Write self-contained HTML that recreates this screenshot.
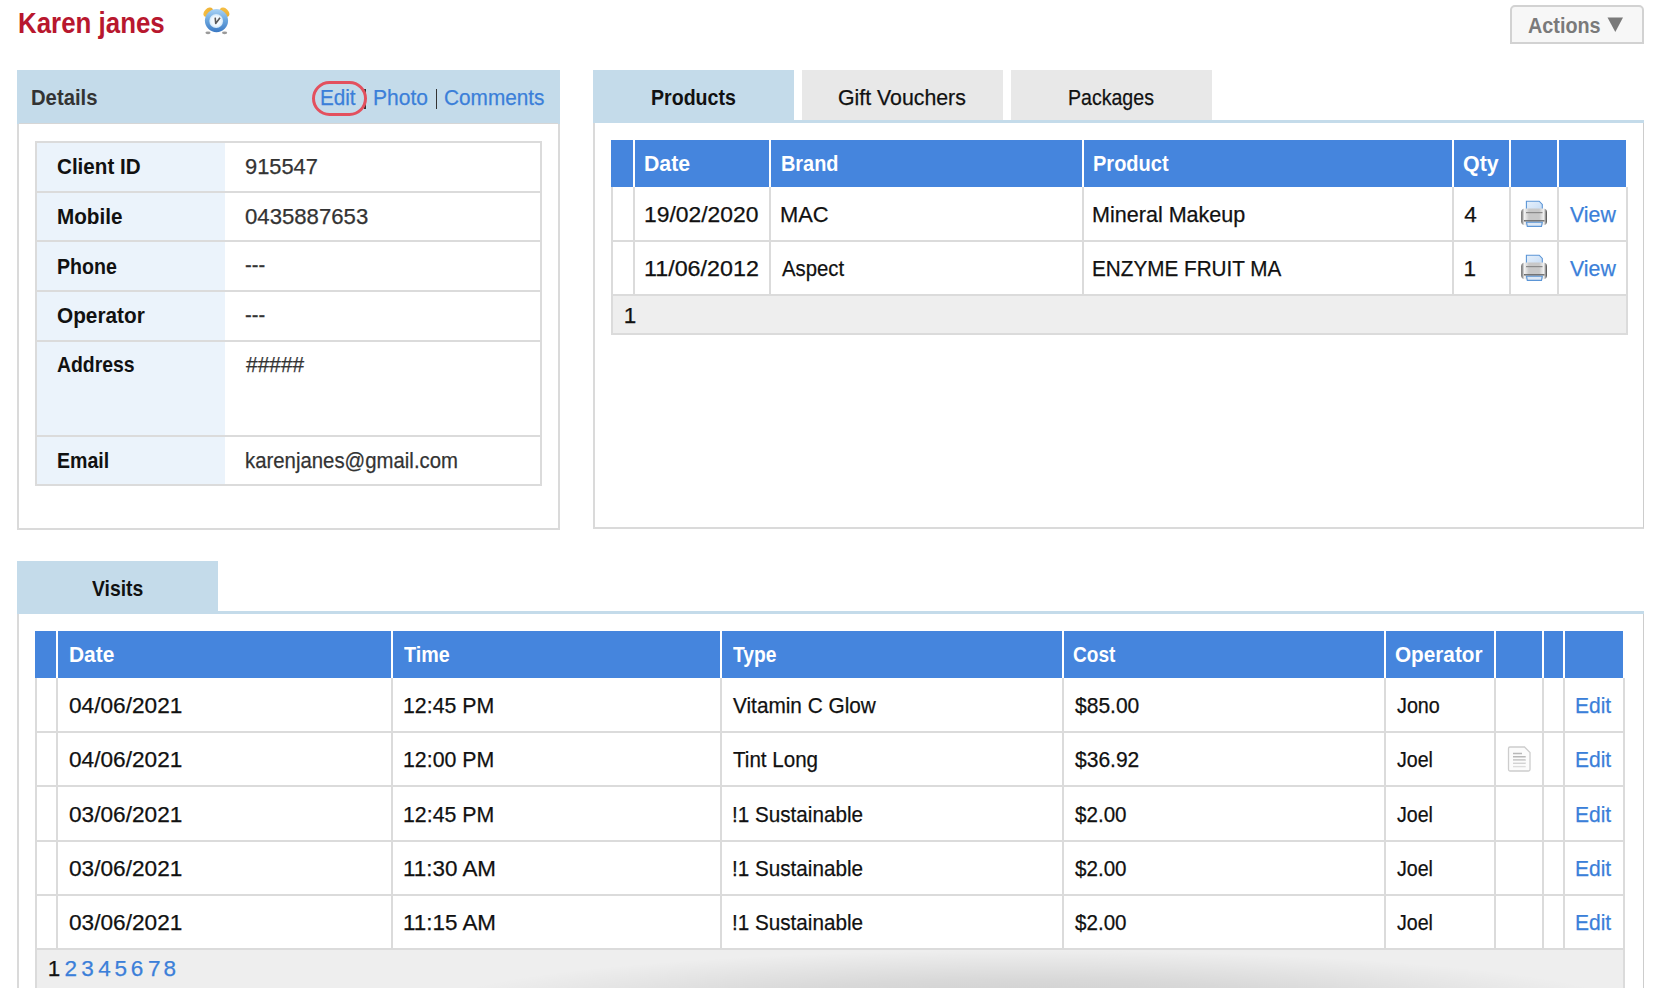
<!DOCTYPE html>
<html><head><meta charset="utf-8"><style>
html,body{margin:0;padding:0;background:#fff;width:1662px;height:988px;overflow:hidden;}
body{position:relative;font-family:"Liberation Sans", sans-serif;}
body>div,body>span,body>svg{position:absolute;}
span{white-space:pre;-webkit-text-stroke:0.25px currentColor;}
span.b{-webkit-text-stroke:0;font-weight:700;}
</style></head><body>
<span class="b" style="left:17.50px;top:7px;font-size:28.8px;line-height:32px;color:#b8172e;transform:scaleX(0.8988);transform-origin:0 0;">Karen janes</span>
<svg style="left:196px;top:2px" width="44" height="44" viewBox="0 0 44 44">
<defs>
<linearGradient id="cb" x1="0" y1="0" x2="0" y2="1"><stop offset="0" stop-color="#a9d3f5"/><stop offset="0.5" stop-color="#6aa5dd"/><stop offset="1" stop-color="#3b79c4"/></linearGradient>
<radialGradient id="cf" cx="0.5" cy="0.5" r="0.5"><stop offset="0" stop-color="#ffffff"/><stop offset="0.7" stop-color="#eef7fd"/><stop offset="1" stop-color="#cfe6f8"/></radialGradient>
<linearGradient id="bell" x1="0" y1="0" x2="1" y2="1"><stop offset="0" stop-color="#f7c24a"/><stop offset="1" stop-color="#e9a928"/></linearGradient>
</defs>
<ellipse cx="12.2" cy="10.2" rx="5.6" ry="3.7" fill="url(#bell)" transform="rotate(-42 12.2 10.2)"/>
<ellipse cx="28.6" cy="10.2" rx="5.6" ry="3.7" fill="url(#bell)" transform="rotate(42 28.6 10.2)"/>
<ellipse cx="12" cy="30.8" rx="2.6" ry="1.4" fill="#9a9a9a"/>
<ellipse cx="28.6" cy="30.8" rx="2.6" ry="1.4" fill="#9a9a9a"/>
<circle cx="20.5" cy="18.6" r="11.6" fill="url(#cb)"/>
<circle cx="20.2" cy="19" r="6.9" fill="url(#cf)"/>
<path d="M19.2 15.6 L19.7 21.4 L24 15.8" stroke="#5a5a5a" stroke-width="1.6" fill="none" stroke-linejoin="round"/>
</svg>
<div style="left:1510px;top:5px;width:134px;height:38.5px;background:#f7f7f7;border:2px solid #d2d2d2;border-radius:5px 5px 0 0;box-sizing:border-box;"></div>
<span class="b" style="left:1527.80px;top:13px;font-size:22.5px;line-height:25px;color:#7a7a7a;transform:scaleX(0.8795);transform-origin:0 0;">Actions</span>
<svg style="left:1607px;top:17px" width="17" height="16" viewBox="0 0 17 16"><path d="M0.5 0.5 L16 0.5 L8.3 15 Z" fill="#7a7a7a"/></svg>
<div style="left:17px;top:70px;width:543px;height:460px;background:#fff;border:2px solid #dadada;box-sizing:border-box;"></div>
<div style="left:17px;top:70px;width:543px;height:54px;background:#c4dbea;"></div>
<div style="left:19px;top:123px;width:539px;height:1px;background:#d6d6d6;"></div>
<span class="b" style="left:31.40px;top:85px;font-size:22.5px;line-height:25px;color:#333;transform:scaleX(0.9000);transform-origin:0 0;">Details</span>
<span style="left:319.58px;top:85px;font-size:22.5px;line-height:25px;color:#3b7fd9;transform:scaleX(0.9179);transform-origin:0 0;">Edit</span>
<div style="left:364px;top:89px;width:1.5px;height:20px;background:#333;"></div>
<span style="left:372.57px;top:85px;font-size:22.5px;line-height:25px;color:#3b7fd9;transform:scaleX(0.9345);transform-origin:0 0;">Photo</span>
<div style="left:435.5px;top:89px;width:1.5px;height:20px;background:#333;"></div>
<span style="left:444.00px;top:85px;font-size:22.5px;line-height:25px;color:#3b7fd9;transform:scaleX(0.9239);transform-origin:0 0;">Comments</span>
<div style="left:311.5px;top:80.5px;width:55px;height:35px;border:3px solid #e3505e;border-radius:18px;box-sizing:border-box;"></div>
<div style="left:35px;top:141px;width:507px;height:345px;background:#fff;border:2px solid #dbdbdb;box-sizing:border-box;"></div>
<div style="left:37px;top:143px;width:188px;height:341px;background:#ebf3fb;"></div>
<div style="left:35px;top:191px;width:507px;height:2px;background:#dbdbdb;"></div>
<div style="left:35px;top:240px;width:507px;height:2px;background:#dbdbdb;"></div>
<div style="left:35px;top:290px;width:507px;height:2px;background:#dbdbdb;"></div>
<div style="left:35px;top:340px;width:507px;height:2px;background:#dbdbdb;"></div>
<div style="left:35px;top:435px;width:507px;height:2px;background:#dbdbdb;"></div>
<span class="b" style="left:57.20px;top:154px;font-size:22.5px;line-height:25px;color:#111;transform:scaleX(0.9165);transform-origin:0 0;">Client ID</span>
<span style="left:245.20px;top:154px;font-size:22.5px;line-height:25px;color:#333;transform:scaleX(0.9707);transform-origin:0 0;">915547</span>
<span class="b" style="left:57.20px;top:204px;font-size:22.5px;line-height:25px;color:#111;transform:scaleX(0.9194);transform-origin:0 0;">Mobile</span>
<span style="left:245.20px;top:204px;font-size:22.5px;line-height:25px;color:#333;transform:scaleX(0.9848);transform-origin:0 0;">0435887653</span>
<span class="b" style="left:57.20px;top:254px;font-size:22.5px;line-height:25px;color:#111;transform:scaleX(0.8710);transform-origin:0 0;">Phone</span>
<span style="left:245.20px;top:252px;font-size:22.5px;line-height:25px;color:#333;transform:scaleX(0.8957);transform-origin:0 0;">---</span>
<span class="b" style="left:57.20px;top:303px;font-size:22.5px;line-height:25px;color:#111;transform:scaleX(0.9240);transform-origin:0 0;">Operator</span>
<span style="left:245.20px;top:302px;font-size:22.5px;line-height:25px;color:#333;transform:scaleX(0.8957);transform-origin:0 0;">---</span>
<span class="b" style="left:57.20px;top:352px;font-size:22.5px;line-height:25px;color:#111;transform:scaleX(0.8622);transform-origin:0 0;">Address</span>
<span style="left:246.13px;top:352px;font-size:22.5px;line-height:25px;color:#333;transform:scaleX(0.9292);transform-origin:0 0;">#####</span>
<span class="b" style="left:57.20px;top:448px;font-size:22.5px;line-height:25px;color:#111;transform:scaleX(0.8700);transform-origin:0 0;">Email</span>
<span style="left:245.20px;top:448px;font-size:22.5px;line-height:25px;color:#333;transform:scaleX(0.9047);transform-origin:0 0;">karenjanes@gmail.com</span>
<div style="left:593px;top:120px;width:1051px;height:409px;background:#fff;border:2px solid #dadada;border-right:1px solid #cdcdcd;border-top:none;box-sizing:border-box;"></div>
<div style="left:593px;top:120px;width:1051px;height:3px;background:#c4dbea;"></div>
<div style="left:593px;top:70px;width:201px;height:53px;background:#c4dbea;"></div>
<div style="left:802px;top:70px;width:201px;height:50px;background:#e8e8e8;"></div>
<div style="left:1011px;top:70px;width:201px;height:50px;background:#e8e8e8;"></div>
<span class="b" style="left:651.20px;top:85px;font-size:22.5px;line-height:25px;color:#111;transform:scaleX(0.8704);transform-origin:0 0;">Products</span>
<span style="left:838.00px;top:85px;font-size:22.5px;line-height:25px;color:#111;transform:scaleX(0.9467);transform-origin:0 0;">Gift Vouchers</span>
<span style="left:1068.13px;top:85px;font-size:22.5px;line-height:25px;color:#111;transform:scaleX(0.8694);transform-origin:0 0;">Packages</span>
<div style="left:611px;top:140px;width:1015px;height:47px;background:#4585dd;"></div>
<div style="left:633px;top:140px;width:2px;height:47px;background:#fff;"></div>
<div style="left:769px;top:140px;width:2px;height:47px;background:#fff;"></div>
<div style="left:1082px;top:140px;width:2px;height:47px;background:#fff;"></div>
<div style="left:1452px;top:140px;width:2px;height:47px;background:#fff;"></div>
<div style="left:1509px;top:140px;width:2px;height:47px;background:#fff;"></div>
<div style="left:1557px;top:140px;width:2px;height:47px;background:#fff;"></div>
<div style="left:611px;top:187px;width:1017px;height:107px;background:#fff;"></div>
<div style="left:611px;top:187px;width:2px;height:148px;background:#dbdbdb;"></div>
<div style="left:1626px;top:187px;width:2px;height:148px;background:#dbdbdb;"></div>
<div style="left:633px;top:187px;width:2px;height:107px;background:#dbdbdb;"></div>
<div style="left:769px;top:187px;width:2px;height:107px;background:#dbdbdb;"></div>
<div style="left:1082px;top:187px;width:2px;height:107px;background:#dbdbdb;"></div>
<div style="left:1452px;top:187px;width:2px;height:107px;background:#dbdbdb;"></div>
<div style="left:1509px;top:187px;width:2px;height:107px;background:#dbdbdb;"></div>
<div style="left:1557px;top:187px;width:2px;height:107px;background:#dbdbdb;"></div>
<div style="left:611px;top:240px;width:1017px;height:2px;background:#dbdbdb;"></div>
<div style="left:611px;top:294px;width:1017px;height:2px;background:#dbdbdb;"></div>
<div style="left:613px;top:296px;width:1013px;height:37px;background:#eeeeee;"></div>
<div style="left:611px;top:333px;width:1017px;height:2px;background:#dbdbdb;"></div>
<span class="b" style="left:644.30px;top:151px;font-size:22.5px;line-height:25px;color:#fff;transform:scaleX(0.9449);transform-origin:0 0;">Date</span>
<span class="b" style="left:780.90px;top:151px;font-size:22.5px;line-height:25px;color:#fff;transform:scaleX(0.8846);transform-origin:0 0;">Brand</span>
<span class="b" style="left:1093.00px;top:151px;font-size:22.5px;line-height:25px;color:#fff;transform:scaleX(0.8895);transform-origin:0 0;">Product</span>
<span class="b" style="left:1463.30px;top:151px;font-size:22.5px;line-height:25px;color:#fff;transform:scaleX(0.9500);transform-origin:0 0;">Qty</span>
<span style="left:644.08px;top:202px;font-size:22.5px;line-height:25px;color:#111;transform:scaleX(1.0170);transform-origin:0 0;">19/02/2020</span>
<span style="left:779.93px;top:202px;font-size:22.5px;line-height:25px;color:#111;transform:scaleX(0.9714);transform-origin:0 0;">MAC</span>
<span style="left:1092.04px;top:202px;font-size:22.5px;line-height:25px;color:#111;transform:scaleX(0.9579);transform-origin:0 0;">Mineral Makeup</span>
<span style="left:1464.30px;top:202px;font-size:22.5px;line-height:25px;color:#111;">4</span>
<svg style="left:1512px;top:192px" width="44" height="44" viewBox="0 0 44 44"><defs><linearGradient id="pb222" x1="0" y1="0" x2="1" y2="0"><stop offset="0" stop-color="#555"/><stop offset="0.12" stop-color="#f4f4f4"/><stop offset="0.3" stop-color="#c8c8c8"/><stop offset="0.7" stop-color="#c8c8c8"/><stop offset="0.88" stop-color="#f4f4f4"/><stop offset="1" stop-color="#444"/></linearGradient><linearGradient id="pp222" x1="0" y1="0" x2="1" y2="1"><stop offset="0" stop-color="#e6f0fb"/><stop offset="1" stop-color="#c3daf4"/></linearGradient></defs><path d="M14.4 9.2 H27.2 L30.3 12.4 V21 H14.4 Z" fill="url(#pp222)" stroke="#5b95d6" stroke-width="1.1"/><rect x="9.2" y="16.6" width="25.8" height="16.6" rx="4" fill="url(#pb222)"/><path d="M14 20.6 H30.5" stroke="#8a8a8a" stroke-width="1.2"/><path d="M12 28.8 H32.5" stroke="#6a6a6a" stroke-width="1.4"/><path d="M14.5 30.2 H30.3 L29.5 34.4 H15.3 Z" fill="#dde8f5" stroke="#5b95d6" stroke-width="1.1"/></svg>
<span style="left:1569.95px;top:202px;font-size:22.5px;line-height:25px;color:#3b7fd9;transform:scaleX(0.9460);transform-origin:0 0;">View</span>
<span style="left:644.06px;top:256px;font-size:22.5px;line-height:25px;color:#111;transform:scaleX(1.0355);transform-origin:0 0;">11/06/2012</span>
<span style="left:781.80px;top:256px;font-size:22.5px;line-height:25px;color:#111;transform:scaleX(0.9028);transform-origin:0 0;">Aspect</span>
<span style="left:1092.08px;top:256px;font-size:22.5px;line-height:25px;color:#111;transform:scaleX(0.9199);transform-origin:0 0;">ENZYME FRUIT MA</span>
<span style="left:1463.50px;top:256px;font-size:22.5px;line-height:25px;color:#111;">1</span>
<svg style="left:1512px;top:246px" width="44" height="44" viewBox="0 0 44 44"><defs><linearGradient id="pb276" x1="0" y1="0" x2="1" y2="0"><stop offset="0" stop-color="#555"/><stop offset="0.12" stop-color="#f4f4f4"/><stop offset="0.3" stop-color="#c8c8c8"/><stop offset="0.7" stop-color="#c8c8c8"/><stop offset="0.88" stop-color="#f4f4f4"/><stop offset="1" stop-color="#444"/></linearGradient><linearGradient id="pp276" x1="0" y1="0" x2="1" y2="1"><stop offset="0" stop-color="#e6f0fb"/><stop offset="1" stop-color="#c3daf4"/></linearGradient></defs><path d="M14.4 9.2 H27.2 L30.3 12.4 V21 H14.4 Z" fill="url(#pp276)" stroke="#5b95d6" stroke-width="1.1"/><rect x="9.2" y="16.6" width="25.8" height="16.6" rx="4" fill="url(#pb276)"/><path d="M14 20.6 H30.5" stroke="#8a8a8a" stroke-width="1.2"/><path d="M12 28.8 H32.5" stroke="#6a6a6a" stroke-width="1.4"/><path d="M14.5 30.2 H30.3 L29.5 34.4 H15.3 Z" fill="#dde8f5" stroke="#5b95d6" stroke-width="1.1"/></svg>
<span style="left:1569.95px;top:256px;font-size:22.5px;line-height:25px;color:#3b7fd9;transform:scaleX(0.9460);transform-origin:0 0;">View</span>
<span style="left:623.80px;top:303px;font-size:22.5px;line-height:25px;color:#111;">1</span>
<div style="left:17px;top:611px;width:1627px;height:400px;background:#fff;border:2px solid #dadada;border-right:1px solid #cdcdcd;border-top:none;box-sizing:border-box;"></div>
<div style="left:17px;top:611px;width:1627px;height:3px;background:#c4dbea;"></div>
<div style="left:17px;top:561px;width:201px;height:53px;background:#c4dbea;"></div>
<span class="b" style="left:92.36px;top:576px;font-size:22.5px;line-height:25px;color:#111;transform:scaleX(0.8607);transform-origin:0 0;">Visits</span>
<div style="left:35px;top:631px;width:1588px;height:47px;background:#4585dd;"></div>
<div style="left:56px;top:631px;width:2px;height:47px;background:#fff;"></div>
<div style="left:391px;top:631px;width:2px;height:47px;background:#fff;"></div>
<div style="left:720px;top:631px;width:2px;height:47px;background:#fff;"></div>
<div style="left:1062px;top:631px;width:2px;height:47px;background:#fff;"></div>
<div style="left:1384px;top:631px;width:2px;height:47px;background:#fff;"></div>
<div style="left:1494px;top:631px;width:2px;height:47px;background:#fff;"></div>
<div style="left:1542px;top:631px;width:2px;height:47px;background:#fff;"></div>
<div style="left:1563px;top:631px;width:2px;height:47px;background:#fff;"></div>
<div style="left:35px;top:678px;width:1590px;height:270px;background:#fff;"></div>
<div style="left:35px;top:678px;width:2px;height:332px;background:#dbdbdb;"></div>
<div style="left:1623px;top:678px;width:2px;height:332px;background:#dbdbdb;"></div>
<div style="left:56px;top:678px;width:2px;height:270px;background:#dbdbdb;"></div>
<div style="left:391px;top:678px;width:2px;height:270px;background:#dbdbdb;"></div>
<div style="left:720px;top:678px;width:2px;height:270px;background:#dbdbdb;"></div>
<div style="left:1062px;top:678px;width:2px;height:270px;background:#dbdbdb;"></div>
<div style="left:1384px;top:678px;width:2px;height:270px;background:#dbdbdb;"></div>
<div style="left:1494px;top:678px;width:2px;height:270px;background:#dbdbdb;"></div>
<div style="left:1542px;top:678px;width:2px;height:270px;background:#dbdbdb;"></div>
<div style="left:1563px;top:678px;width:2px;height:270px;background:#dbdbdb;"></div>
<div style="left:35px;top:731px;width:1590px;height:2px;background:#dbdbdb;"></div>
<div style="left:35px;top:785px;width:1590px;height:2px;background:#dbdbdb;"></div>
<div style="left:35px;top:840px;width:1590px;height:2px;background:#dbdbdb;"></div>
<div style="left:35px;top:894px;width:1590px;height:2px;background:#dbdbdb;"></div>
<div style="left:35px;top:948px;width:1590px;height:2px;background:#dbdbdb;"></div>
<div style="left:37px;top:950px;width:1586px;height:58px;background:#eeeeee;"></div>
<div style="left:35px;top:1008px;width:1590px;height:2px;background:#dbdbdb;"></div>
<span class="b" style="left:69.10px;top:642px;font-size:22.5px;line-height:25px;color:#fff;transform:scaleX(0.9286);transform-origin:0 0;">Date</span>
<span class="b" style="left:404.48px;top:642px;font-size:22.5px;line-height:25px;color:#fff;transform:scaleX(0.8755);transform-origin:0 0;">Time</span>
<span class="b" style="left:732.86px;top:642px;font-size:22.5px;line-height:25px;color:#fff;transform:scaleX(0.8558);transform-origin:0 0;">Type</span>
<span class="b" style="left:1073.40px;top:642px;font-size:22.5px;line-height:25px;color:#fff;transform:scaleX(0.8471);transform-origin:0 0;">Cost</span>
<span class="b" style="left:1395.30px;top:642px;font-size:22.5px;line-height:25px;color:#fff;transform:scaleX(0.9208);transform-origin:0 0;">Operator</span>
<span style="left:69.10px;top:693px;font-size:22.5px;line-height:25px;color:#111;transform:scaleX(1.0062);transform-origin:0 0;">04/06/2021</span>
<span style="left:402.65px;top:693px;font-size:22.5px;line-height:25px;color:#111;transform:scaleX(0.9474);transform-origin:0 0;">12:45 PM</span>
<span style="left:732.92px;top:693px;font-size:22.5px;line-height:25px;color:#111;transform:scaleX(0.9236);transform-origin:0 0;">Vitamin C Glow</span>
<span style="left:1074.53px;top:693px;font-size:22.5px;line-height:25px;color:#111;transform:scaleX(0.9343);transform-origin:0 0;">$85.00</span>
<span style="left:1396.68px;top:693px;font-size:22.5px;line-height:25px;color:#111;transform:scaleX(0.8780);transform-origin:0 0;">Jono</span>
<span style="left:1575.07px;top:693px;font-size:22.5px;line-height:25px;color:#3b7fd9;transform:scaleX(0.9333);transform-origin:0 0;">Edit</span>
<span style="left:69.10px;top:747px;font-size:22.5px;line-height:25px;color:#111;transform:scaleX(1.0062);transform-origin:0 0;">04/06/2021</span>
<span style="left:402.65px;top:747px;font-size:22.5px;line-height:25px;color:#111;transform:scaleX(0.9474);transform-origin:0 0;">12:00 PM</span>
<span style="left:732.91px;top:747px;font-size:22.5px;line-height:25px;color:#111;transform:scaleX(0.9149);transform-origin:0 0;">Tint Long</span>
<span style="left:1074.53px;top:747px;font-size:22.5px;line-height:25px;color:#111;transform:scaleX(0.9343);transform-origin:0 0;">$36.92</span>
<span style="left:1396.67px;top:747px;font-size:22.5px;line-height:25px;color:#111;transform:scaleX(0.8714);transform-origin:0 0;">Joel</span>
<span style="left:1575.07px;top:747px;font-size:22.5px;line-height:25px;color:#3b7fd9;transform:scaleX(0.9333);transform-origin:0 0;">Edit</span>
<span style="left:69.10px;top:802px;font-size:22.5px;line-height:25px;color:#111;transform:scaleX(1.0062);transform-origin:0 0;">03/06/2021</span>
<span style="left:402.65px;top:802px;font-size:22.5px;line-height:25px;color:#111;transform:scaleX(0.9474);transform-origin:0 0;">12:45 PM</span>
<span style="left:731.58px;top:802px;font-size:22.5px;line-height:25px;color:#111;transform:scaleX(0.9190);transform-origin:0 0;">!1 Sustainable</span>
<span style="left:1074.52px;top:802px;font-size:22.5px;line-height:25px;color:#111;transform:scaleX(0.9155);transform-origin:0 0;">$2.00</span>
<span style="left:1396.67px;top:802px;font-size:22.5px;line-height:25px;color:#111;transform:scaleX(0.8714);transform-origin:0 0;">Joel</span>
<span style="left:1575.07px;top:802px;font-size:22.5px;line-height:25px;color:#3b7fd9;transform:scaleX(0.9333);transform-origin:0 0;">Edit</span>
<span style="left:69.10px;top:856px;font-size:22.5px;line-height:25px;color:#111;transform:scaleX(1.0062);transform-origin:0 0;">03/06/2021</span>
<span style="left:402.60px;top:856px;font-size:22.5px;line-height:25px;color:#111;transform:scaleX(0.9957);transform-origin:0 0;">11:30 AM</span>
<span style="left:731.58px;top:856px;font-size:22.5px;line-height:25px;color:#111;transform:scaleX(0.9190);transform-origin:0 0;">!1 Sustainable</span>
<span style="left:1074.52px;top:856px;font-size:22.5px;line-height:25px;color:#111;transform:scaleX(0.9155);transform-origin:0 0;">$2.00</span>
<span style="left:1396.67px;top:856px;font-size:22.5px;line-height:25px;color:#111;transform:scaleX(0.8714);transform-origin:0 0;">Joel</span>
<span style="left:1575.07px;top:856px;font-size:22.5px;line-height:25px;color:#3b7fd9;transform:scaleX(0.9333);transform-origin:0 0;">Edit</span>
<span style="left:69.10px;top:910px;font-size:22.5px;line-height:25px;color:#111;transform:scaleX(1.0062);transform-origin:0 0;">03/06/2021</span>
<span style="left:402.60px;top:910px;font-size:22.5px;line-height:25px;color:#111;transform:scaleX(0.9957);transform-origin:0 0;">11:15 AM</span>
<span style="left:731.58px;top:910px;font-size:22.5px;line-height:25px;color:#111;transform:scaleX(0.9190);transform-origin:0 0;">!1 Sustainable</span>
<span style="left:1074.52px;top:910px;font-size:22.5px;line-height:25px;color:#111;transform:scaleX(0.9155);transform-origin:0 0;">$2.00</span>
<span style="left:1396.67px;top:910px;font-size:22.5px;line-height:25px;color:#111;transform:scaleX(0.8714);transform-origin:0 0;">Joel</span>
<span style="left:1575.07px;top:910px;font-size:22.5px;line-height:25px;color:#3b7fd9;transform:scaleX(0.9333);transform-origin:0 0;">Edit</span>
<svg style="left:1497px;top:737px" width="44" height="44" viewBox="0 0 44 44"><path d="M13 10 H27.5 L33 15.5 V32.5 Q33 34 31.5 34 H13 Q11.5 34 11.5 32.5 V11.5 Q11.5 10 13 10 Z" fill="#fbfbfb" stroke="#cdcdcd" stroke-width="1.3"/><path d="M16 16.5 H25 M16 19.7 H28.7" stroke="#b8b8b8" stroke-width="1.5"/><path d="M16 22.9 H28.7" stroke="#c4c4c4" stroke-width="1.5"/><path d="M16 26.3 H28.7" stroke="#d2d2d2" stroke-width="1.4"/><path d="M16 29.6 H28.7" stroke="#dcdcdc" stroke-width="1.4"/></svg>
<span style="left:47.80px;top:956px;font-size:22.5px;line-height:25px;color:#111;">1</span>
<span style="left:64.50px;top:956px;font-size:22.5px;line-height:25px;color:#3b7fd9;">2</span>
<span style="left:81.30px;top:956px;font-size:22.5px;line-height:25px;color:#3b7fd9;">3</span>
<span style="left:98.20px;top:956px;font-size:22.5px;line-height:25px;color:#3b7fd9;">4</span>
<span style="left:114.40px;top:956px;font-size:22.5px;line-height:25px;color:#3b7fd9;">5</span>
<span style="left:130.80px;top:956px;font-size:22.5px;line-height:25px;color:#3b7fd9;">6</span>
<span style="left:148.00px;top:956px;font-size:22.5px;line-height:25px;color:#3b7fd9;">7</span>
<span style="left:163.60px;top:956px;font-size:22.5px;line-height:25px;color:#3b7fd9;">8</span>
<div style="left:37px;top:950px;width:1584px;height:38px;background:radial-gradient(ellipse 600px 58px at 993px 58px, rgba(0,0,0,0.15) 0%, rgba(0,0,0,0.09) 50%, rgba(0,0,0,0) 100%);"></div>
</body></html>
